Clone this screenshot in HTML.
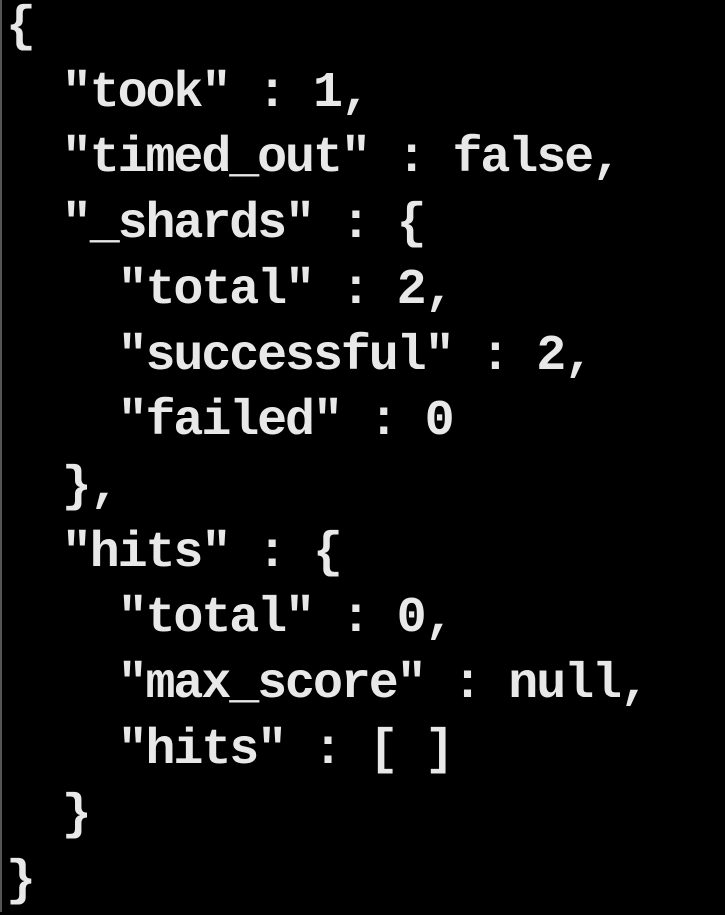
<!DOCTYPE html>
<html><head><style>
html,body{margin:0;padding:0;background:#000;width:725px;height:912px;overflow:hidden;}
body{border-left:2px solid #555;box-sizing:border-box;}
pre{position:absolute;left:6px;top:-5px;margin:0;font-family:"Liberation Mono","DejaVu Sans Mono",monospace;font-size:50px;letter-spacing:-2.1px;line-height:65.7px;color:#e8e8e8;font-weight:bold;}
</style></head><body>
<pre>{
  "took" : 1,
  "timed_out" : false,
  "_shards" : {
    "total" : 2,
    "successful" : 2,
    "failed" : 0
  },
  "hits" : {
    "total" : 0,
    "max_score" : null,
    "hits" : [ ]
  }
}</pre>
</body></html>
